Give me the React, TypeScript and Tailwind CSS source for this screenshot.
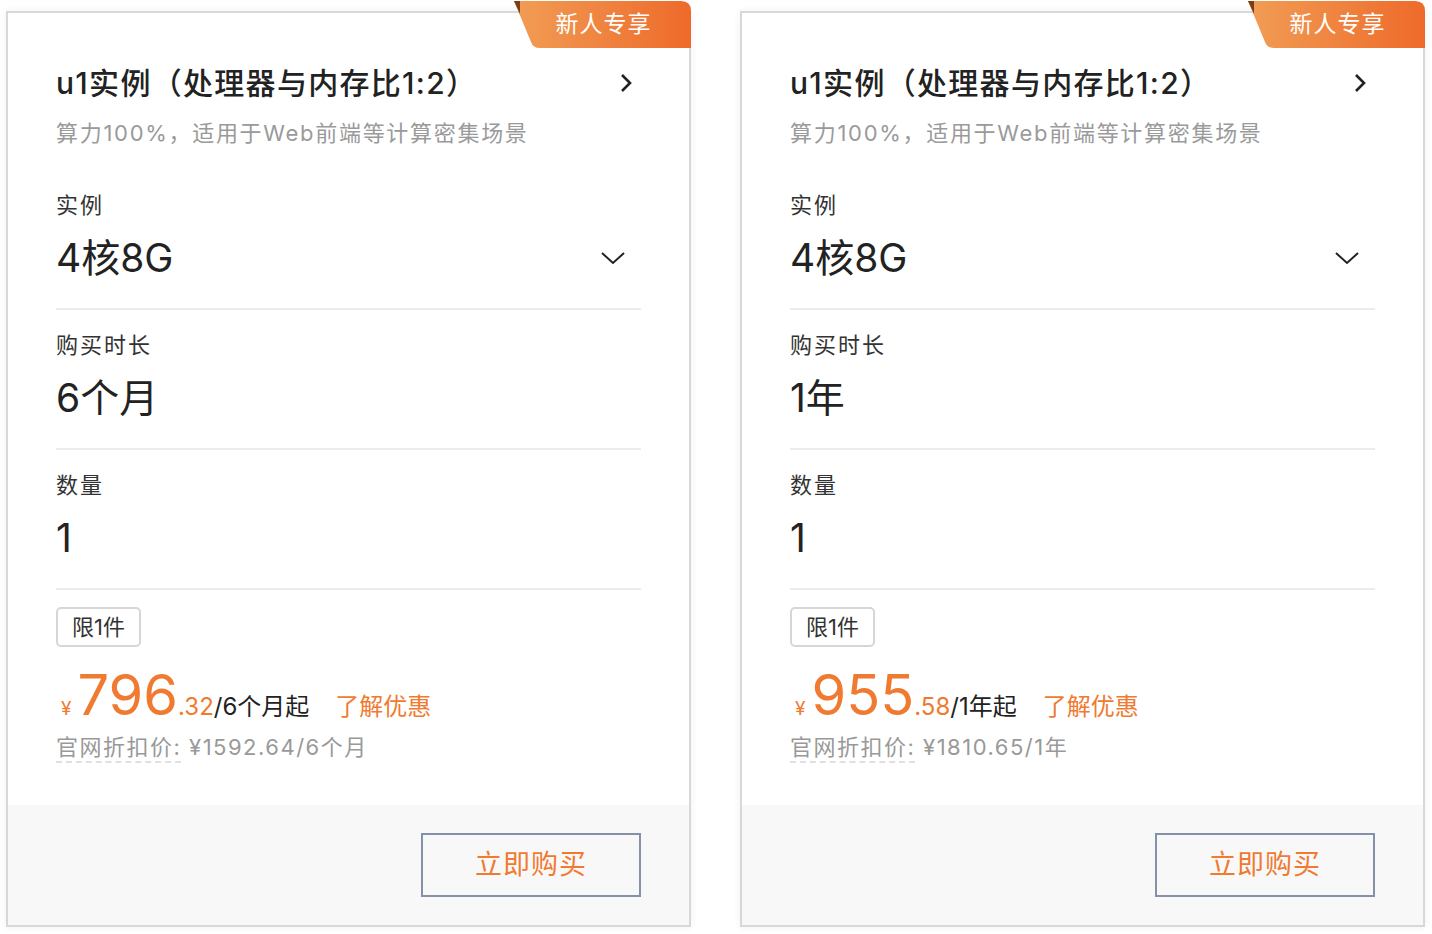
const plans = [
  { id: 1, duration: '6个月', price: '796', cents: '.32', unit: '/6个月起', list: '¥1592.64/6个月' },
  { id: 2, duration: '1年', price: '955', cents: '.58', unit: '/1年起', list: '¥1810.65/1年' }
];

function Badge() {
  return (
    <div className="absolute top-[-13px] right-[-2px] w-[177px] h-[48px]">
      <svg width="177" height="48" viewBox="0 0 177 48" className="absolute inset-0">
        <defs>
          <linearGradient id="bg" x1="0" y1="0" x2="1" y2="0">
            <stop offset="0" stopColor="#f19d55" />
            <stop offset="1" stopColor="#ee6a2a" />
          </linearGradient>
        </defs>
        <path d="M0 1 L167 1 Q177 1 177 11 L177 48 L26 48 Q19 48 17 42 Z" fill="url(#bg)" />
        <path d="M0 1 L6 1 L6 14 Z" fill="#7a3f16" />
      </svg>
      <span className="absolute inset-0 pl-[2px] flex items-center justify-center text-white text-[23px] tracking-[1px]">新人专享</span>
    </div>
  );
}

function Section({ label, value, chevron }: { label: string; value: string; chevron?: boolean }) {
  return (
    <div>
      <div className="h-[30px] leading-[30px] text-[22px] tracking-[2px] text-[#333]">{label}</div>
      <div className="mt-[13px] h-[50px] flex items-center justify-between">
        <span className="text-[39px] leading-[50px] text-[#222]">{value}</span>
        {chevron && (
          <svg width="26" height="16" viewBox="0 0 26 16" className="mr-[15px]" fill="none" stroke="#222" strokeWidth="2">
            <path d="M2 3 L13 13 L24 3" />
          </svg>
        )}
      </div>
      <div className="mt-[25px] h-[2px] bg-[#ececec]" />
    </div>
  );
}

function Card({ plan }: { plan: typeof plans[number] }) {
  return (
    <div className="relative w-[685px] h-[916px] border-2 border-[#d8d8dc] bg-white flex flex-col shadow-[0_0_8px_rgba(0,0,0,0.06)]">
      <Badge />
      <div className="flex-1 px-12 pt-[50px]">
        <div className="flex items-center justify-between h-[40px]">
          <span className="text-[30px] leading-[40px] font-medium tracking-[1.3px] text-[#222]">u1实例（处理器与内存比1:2）</span>
          <svg width="14" height="22" viewBox="0 0 14 22" className="mr-[8px]" fill="none" stroke="#222" strokeWidth="2.6">
            <path d="M3 3 L11 11 L3 19" />
          </svg>
        </div>
        <div className="mt-[15px] h-[30px] leading-[30px] text-[22px] tracking-[1.7px] text-[#9a9a9a]">算力100%，适用于Web前端等计算密集场景</div>
        <div className="mt-[42px]">
          <Section label="实例" value="4核8G" chevron />
        </div>
        <div className="mt-[20px]">
          <Section label="购买时长" value={plan.duration} />
        </div>
        <div className="mt-[20px]">
          <Section label="数量" value="1" />
        </div>
        <div className="mt-[17px] inline-flex items-center h-[40px] px-[14px] border-2 border-[#d6d6d6] rounded-[5px] text-[22px] text-[#333]">限1件</div>
        <div className="mt-[20px] flex items-baseline leading-none">
          <span className="text-[19px] text-[#f07a30] ml-[5px] mr-[6px]">¥</span>
          <span className="text-[56px] text-[#f07a30]">{plan.price}</span>
          <span className="text-[24px] text-[#f07a30]">{plan.cents}</span>
          <span className="text-[24px] text-[#222]">{plan.unit}</span>
          <span className="text-[24px] text-[#f07a30] ml-[26px]">了解优惠</span>
        </div>
        <div className="mt-[9px] h-[30px] leading-[30px] text-[22px] tracking-[1.5px] text-[#999]">
          <span className="border-b-2 border-dashed border-[#e0e0e0] pb-[1px]">官网折扣价:</span> {plan.list}
        </div>
      </div>
      <div className="h-[120px] bg-[#f8f8f8] flex items-center justify-end pr-12">
        <button className="w-[220px] h-[64px] border-2 border-[#8591a9] text-[27px] text-[#f07a30] tracking-[1px]">立即购买</button>
      </div>
    </div>
  );
}

export default function App() {
  return (
    <div className="w-[1432px] h-[934px] bg-white pl-[6px] pt-[11px] flex gap-[49px] font-['Inter','Noto_Sans_CJK_SC',sans-serif]">
      {plans.map((p) => (
        <Card key={p.id} plan={p} />
      ))}
    </div>
  );
}
